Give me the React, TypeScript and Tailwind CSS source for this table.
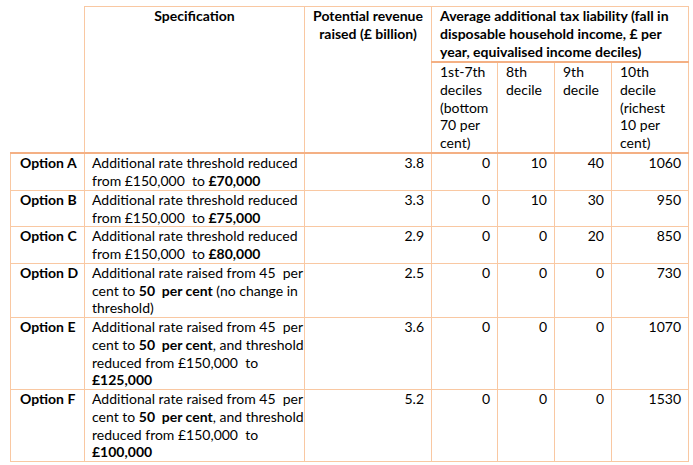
const rows = [
  {
    option: "Option A",
    spec: (
      <>
        {"Additional rate threshold reduced"}
        <br />
        {"from £150,000  to "}
        <b>£70,000</b>
      </>
    ),
    values: ["3.8", "0", "10", "40", "1060"],
  },
  {
    option: "Option B",
    spec: (
      <>
        {"Additional rate threshold reduced"}
        <br />
        {"from £150,000  to "}
        <b>£75,000</b>
      </>
    ),
    values: ["3.3", "0", "10", "30", "950"],
  },
  {
    option: "Option C",
    spec: (
      <>
        {"Additional rate threshold reduced"}
        <br />
        {"from £150,000  to "}
        <b>£80,000</b>
      </>
    ),
    values: ["2.9", "0", "0", "20", "850"],
  },
  {
    option: "Option D",
    spec: (
      <>
        {"Additional rate raised from 45  per"}
        <br />
        {"cent to "}
        <b>{"50  per cent"}</b>
        {" (no change in"}
        <br />
        {"threshold)"}
      </>
    ),
    values: ["2.5", "0", "0", "0", "730"],
  },
  {
    option: "Option E",
    spec: (
      <>
        {"Additional rate raised from 45  per"}
        <br />
        {"cent to "}
        <b>{"50  per cent"}</b>
        {", and threshold"}
        <br />
        {"reduced from £150,000  to"}
        <br />
        <b>£125,000</b>
      </>
    ),
    values: ["3.6", "0", "0", "0", "1070"],
  },
  {
    option: "Option F",
    spec: (
      <>
        {"Additional rate raised from 45  per"}
        <br />
        {"cent to "}
        <b>{"50  per cent"}</b>
        {", and threshold"}
        <br />
        {"reduced from £150,000  to"}
        <br />
        <b>£100,000</b>
      </>
    ),
    values: ["5.2", "0", "0", "0", "1530"],
  },
];

const deciles = [
  ["1st-7th", "deciles", "(bottom", "70 per", "cent)"],
  ["8th", "decile"],
  ["9th", "decile"],
  ["10th", "decile", "(richest", "10 per", "cent)"],
];

const cell = "border border-[#f9c8a2] align-top p-0";

export default function App() {
  return (
    <div className="min-h-[465px] w-[693px] bg-white pt-[6px] pl-[10px] font-['Lato',sans-serif] text-[14px] leading-[17.9px] text-black">
      <table className="w-[678px] table-fixed border-collapse">
        <colgroup>
          <col className="w-[74px]" />
          <col className="w-[220px]" />
          <col className="w-[127px]" />
          <col className="w-[66px]" />
          <col className="w-[57px]" />
          <col className="w-[57px]" />
          <col className="w-[77px]" />
        </colgroup>
        <thead>
          <tr>
            <th rowSpan={2} className="border-b-2 border-b-[#f4b084] p-0" />
            <th rowSpan={2} className={`${cell} border-b-2 border-b-[#f4b084] text-center font-bold`}>
              Specification
            </th>
            <th rowSpan={2} className={`${cell} border-b-2 border-b-[#f4b084] text-center font-bold`}>
              Potential revenue
              <br />
              raised (£ billion)
            </th>
            <th
              colSpan={4}
              className={`${cell} border-b-2 border-b-[#f4b084] px-[8px] text-left font-bold whitespace-nowrap`}
            >
              Average additional tax liability (fall in
              <br />
              disposable household income, £ per
              <br />
              year, equivalised income deciles)
            </th>
          </tr>
          <tr>
            {deciles.map((lines, i) => (
              <th
                key={i}
                className={`${cell} border-b-2 border-b-[#f4b084] px-[8px] text-left font-normal whitespace-nowrap`}
              >
                {lines.map((l, j) => (
                  <div key={j}>{l}</div>
                ))}
              </th>
            ))}
          </tr>
        </thead>
        <tbody className="leading-[17.75px]">
          {rows.map((r) => (
            <tr key={r.option}>
              <td className={`${cell} pl-[9px] font-bold`}>{r.option}</td>
              <td className={`${cell} px-[7px] whitespace-pre`}>{r.spec}</td>
              {r.values.map((v, i) => (
                <td key={i} className={`${cell} pr-[7px] text-right`}>
                  {v}
                </td>
              ))}
            </tr>
          ))}
        </tbody>
      </table>
    </div>
  );
}
